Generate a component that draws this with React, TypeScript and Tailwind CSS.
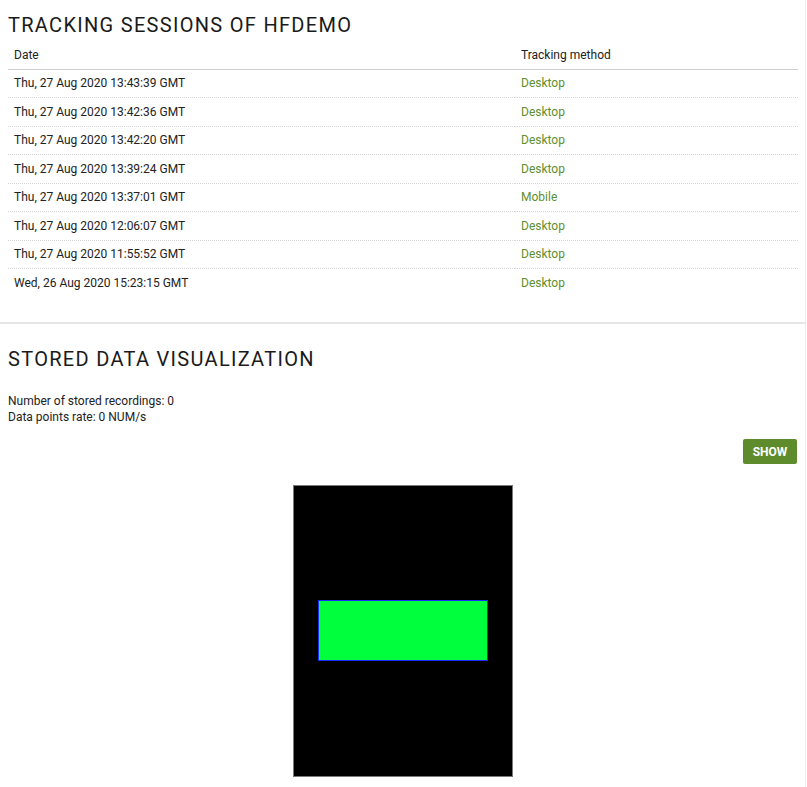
const sessions = [
    { date: "Thu, 27 Aug 2020 13:43:39 GMT", method: "Desktop" },
    { date: "Thu, 27 Aug 2020 13:42:36 GMT", method: "Desktop" },
    { date: "Thu, 27 Aug 2020 13:42:20 GMT", method: "Desktop" },
    { date: "Thu, 27 Aug 2020 13:39:24 GMT", method: "Desktop" },
    { date: "Thu, 27 Aug 2020 13:37:01 GMT", method: "Mobile" },
    { date: "Thu, 27 Aug 2020 12:06:07 GMT", method: "Desktop" },
    { date: "Thu, 27 Aug 2020 11:55:52 GMT", method: "Desktop" },
    { date: "Wed, 26 Aug 2020 15:23:15 GMT", method: "Desktop" },
];

const SectionTitle = ({ text }: { text: string }) => (
    <h2 className="text-[20px] leading-[28px] tracking-[1.3px] font-normal uppercase text-[#1a1a1a]">
        {text}
    </h2>
);

const App = () => {
    return (
        <div
            className="w-[806px] min-h-[787px] bg-white border-r border-[#ececec] text-[#222]"
            style={{ fontFamily: "Roboto, 'Noto Sans', sans-serif" }}
        >
            <section className="px-2 pt-[11px] pb-[25px] border-b-2 border-[#e6e6e6]">
                <SectionTitle text="Tracking sessions of hfdemo" />
                <table className="w-[790px] mt-[2px] text-[12px] border-collapse">
                    <thead>
                        <tr className="h-[28px] border-b border-[#cfcfcf]">
                            <th className="w-[507px] pl-[6px] text-left font-normal">Date</th>
                            <th className="pl-[6px] text-left font-normal">Tracking method</th>
                        </tr>
                    </thead>
                    <tbody>
                        {sessions.map((s, i) => (
                            <tr
                                key={i}
                                className={
                                    i < sessions.length - 1
                                        ? "h-[28.5px] border-b border-dotted border-[#d4d4d4]"
                                        : "h-[28.5px]"
                                }
                            >
                                <td className="pl-[6px]">{s.date}</td>
                                <td className="pl-[6px] text-[#5f8e2d]">{s.method}</td>
                            </tr>
                        ))}
                    </tbody>
                </table>
            </section>

            <section className="px-2 pt-[21px]">
                <SectionTitle text="Stored data visualization" />
                <div className="mt-[20px] text-[12px] leading-[16px]">
                    <p>Number of stored recordings: 0</p>
                    <p>Data points rate: 0 NUM/s</p>
                </div>
                <div className="flex justify-end mt-[14px]">
                    <button className="w-[54px] h-[25px] rounded-[2px] bg-[#5e8b2b] text-white text-[12px] font-bold">
                        SHOW
                    </button>
                </div>
                <div className="flex justify-center mt-[21px]">
                    <div className="w-[220px] h-[292px] border border-[#7a7a7a] bg-black">
                        <svg width="218" height="290" className="block">
                            <rect
                                x="24.5"
                                y="114.5"
                                width="169"
                                height="60"
                                fill="#00ff3c"
                                stroke="#1a2bff"
                                strokeWidth="1"
                            />
                        </svg>
                    </div>
                </div>
            </section>
        </div>
    );
};

export default App;
